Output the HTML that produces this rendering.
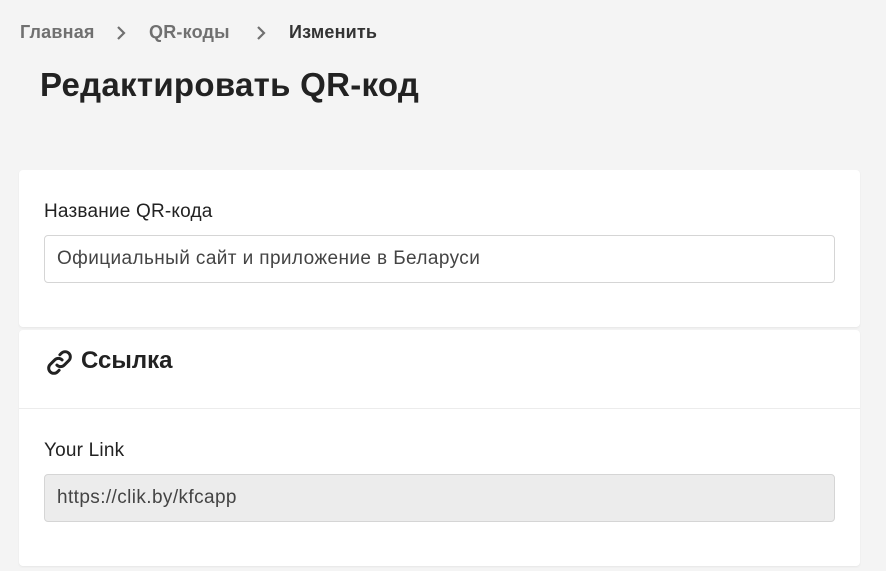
<!DOCTYPE html><html><head><style>
body{margin:0;width:886px;height:571px;background:#f4f4f4;font-family:"Liberation Sans",sans-serif;position:relative;overflow:hidden;color:#212529}
.a{position:absolute}
.bc{top:22px;font-size:18px;font-weight:bold;color:#707070;letter-spacing:0.2px}
.card{left:19px;width:841px;background:#fff;border-radius:4px;box-shadow:0 1px 2px rgba(0,0,0,.06)}
.lab{font-size:19px;color:#222;letter-spacing:0.2px}
.inp{left:44px;width:791px;height:48px;border:1px solid #d5d5d5;border-radius:4px;box-sizing:border-box;font-size:19px;line-height:46px;padding-left:12px;color:#444;letter-spacing:0.4px}
</style></head><body>
<div class="a bc" style="left:20px">Главная</div>
<svg class="a" style="left:116px;top:26px" width="10" height="14" viewBox="0 0 10 14" fill="none" stroke="#707070" stroke-width="2.2"><path d="M2 1l6 6-6 6"/></svg>
<div class="a bc" style="left:149px">QR-коды</div>
<svg class="a" style="left:256px;top:26px" width="10" height="14" viewBox="0 0 10 14" fill="none" stroke="#707070" stroke-width="2.2"><path d="M2 1l6 6-6 6"/></svg>
<div class="a bc" style="left:289px;color:#333">Изменить</div>
<div class="a" style="left:40px;top:66px;font-size:33px;font-weight:bold;color:#222;letter-spacing:0.3px">Редактировать QR-код</div>
<div class="a card" style="top:170px;height:157px"></div>
<div class="a lab" style="left:44px;top:201px">Название QR-кода</div>
<div class="a inp" style="top:235px">Официальный сайт и приложение в Беларуси</div>
<div class="a card" style="top:330px;height:236px"></div>
<svg class="a" style="left:44px;top:347px" width="31" height="31" viewBox="0 0 24 24" fill="none" stroke="#222" stroke-width="2.3" stroke-linecap="round"><path d="M10 14a4 4 0 0 0 5.7 0l3.5-3.5a4 4 0 0 0-5.7-5.7l-1.2 1.2"/><path d="M14 10a4 4 0 0 0-5.7 0l-3.5 3.5a4 4 0 0 0 5.7 5.7l1.2-1.2"/></svg>
<div class="a" style="left:81px;top:347px;font-size:24px;font-weight:bold;color:#222">Ссылка</div>
<div class="a" style="left:19px;top:408px;width:841px;height:1px;background:#ececec"></div>
<div class="a lab" style="left:44px;top:440px">Your Link</div>
<div class="a inp" style="top:474px;background:#ececec">https://clik.by/kfcapp</div>
</body></html>
